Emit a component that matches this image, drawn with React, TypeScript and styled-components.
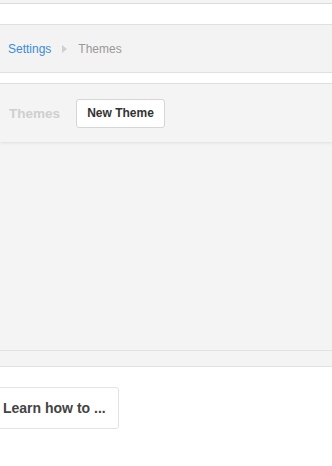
import React from "react";
import styled, { createGlobalStyle } from "styled-components";

const Global = createGlobalStyle`
  html, body { margin: 0; padding: 0; background: #fff; }
  body { font-family: "Liberation Sans", Arial, sans-serif; overflow: hidden; }
`;

const Page = styled.div`
  width: 332px;
  display: flex;
  flex-direction: column;
`;

const TopStrip = styled.div`
  height: 3px;
  background: #f4f4f4;
  border-bottom: 1px solid #dcdcdc;
`;

const Blank = styled.div<{ $h: number }>`
  height: ${(p) => p.$h}px;
  background: #fff;
`;

const Crumbs = styled.nav`
  height: 47px;
  background: #f3f3f3;
  border-top: 1px solid #e0e0e0;
  border-bottom: 1px solid #e0e0e0;
  display: flex;
  align-items: center;
  padding-left: 8px;
  font-size: 12px;
`;

const CrumbLink = styled.a`
  color: #3b8cd6;
  text-decoration: none;
`;

const CrumbArrow = styled.span`
  width: 0;
  height: 0;
  border-top: 4px solid transparent;
  border-bottom: 4px solid transparent;
  border-left: 5px solid #d0d0d0;
  margin: 1px 11px 0 11px;
`;

const CrumbCurrent = styled.span`
  color: #999;
`;

const Panel = styled.section`
  display: flex;
  flex-direction: column;
  background: #f4f4f4;
  border-top: 1px solid #e2e2e2;
  border-bottom: 1px solid #e2e2e2;
`;

const Header = styled.header`
  height: 58px;
  display: flex;
  align-items: center;
  gap: 16px;
  padding-left: 9px;
  background: #f4f4f4;
  box-shadow: 0 1px 3px rgba(0, 0, 0, 0.09);
  position: relative;
  z-index: 1;
`;

const Title = styled.h2`
  margin: 0;
  font-size: 13.5px;
  font-weight: bold;
  color: #cfcfcf;
  padding-top: 1px;
`;

const Button = styled.button`
  height: 29px;
  width: 89px;
  background: #fff;
  border: 1px solid #d6d6d6;
  border-radius: 3px;
  font-family: "Liberation Sans", Arial, sans-serif;
  font-size: 12px;
  font-weight: bold;
  color: #333;
  padding: 0;
`;

const Body = styled.div`
  height: 208px;
`;

const Footer = styled.div`
  height: 15px;
  border-top: 1px solid #e2e2e2;
  background: #f4f4f4;
`;

const Learn = styled.div`
  padding: 20px 0 0 0;
  margin-left: -12px;
`;

const LearnButton = styled.button`
  height: 42px;
  width: 131px;
  background: #fff;
  border: 1px solid #e3e3e3;
  border-radius: 3px;
  font-family: "Liberation Sans", Arial, sans-serif;
  font-size: 14px;
  font-weight: bold;
  color: #444;
  text-align: left;
  padding: 0 0 0 14px;
`;

export default function App() {
  return (
    <>
      <Global />
      <Page>
        <TopStrip />
        <Blank $h={20} />
        <Crumbs>
          <CrumbLink href="#">Settings</CrumbLink>
          <CrumbArrow />
          <CrumbCurrent>Themes</CrumbCurrent>
        </Crumbs>
        <Blank $h={10} />
        <Panel>
          <Header>
            <Title>Themes</Title>
            <Button>New Theme</Button>
          </Header>
          <Body />
          <Footer />
        </Panel>
        <Learn>
          <LearnButton>Learn how to ...</LearnButton>
        </Learn>
      </Page>
    </>
  );
}
